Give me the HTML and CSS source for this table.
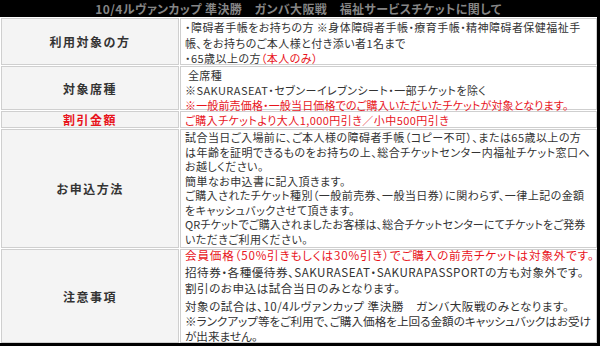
FILE: index.html
```html
<!DOCTYPE html>
<html lang="ja">
<head>
<meta charset="utf-8">
<link rel="stylesheet" href="styles.css">
</head>
<body>
<div class="frame">
  <div class="header">10/4ルヴァンカップ 準決勝　ガンバ大阪戦　福祉サービスチケットに関して</div>
  <div class="table">
    <div class="label">利用対象の方</div>
    <div class="cell r1">・障碍者手帳をお持ちの方 ※身体障碍者手帳・療育手帳・精神障碍者保健福祉手<br>帳、をお持ちのご本人様と付き添い者1名まで<br>・65歳以上の方<span class="red">（本人のみ）</span></div>

    <div class="label">対象席種</div>
    <div class="cell r2">&nbsp;全席種<br>※SAKURASEAT・セブンーイレブンシート・一部チケットを除く<br><span class="red tight">※一般前売価格・一般当日価格でのご購入いただいたチケットが対象となります。</span></div>

    <div class="label red">割引金額</div>
    <div class="cell r3 red">ご購入チケットより大人1,000円引き／小中500円引き</div>

    <div class="label">お申込方法</div>
    <div class="cell r4">試合当日ご入場前に、ご本人様の障碍者手帳（コピー不可）、または65歳以上の方<br>は年齢を証明できるものをお持ちの上、総合チケットセンター内福祉チケット窓口へ<br>お越しください。<br>簡単なお申込書に記入頂きます。<br>ご購入されたチケット種別（一般前売券、一般当日券）に関わらず、一律上記の金額<br>をキャッシュバックさせて頂きます。<br><span class="tight">QRチケットでご購入されましたお客様は、総合チケットセンターにてチケットをご発券</span><br>いただきご利用ください。</div>

    <div class="label">注意事項</div>
    <div class="cell r5">
      <p class="red first">会員価格（50%引きもしくは30%引き）でご購入の前売チケットは対象外です。</p>
      <p>招待券・各種優待券、SAKURASEAT・SAKURAPASSPORTの方も対象外です。</p>
      <p>割引のお申込は試合当日のみとなります。</p>
      <p class="gap">対象の試合は、10/4ルヴァンカップ 準決勝　ガンバ大阪戦のみとなります。</p>
      <p class="short">※ランクアップ等をご利用で、ご購入価格を上回る金額のキャッシュバックはお受け<br>が出来ません。</p>
    </div>
  </div>
</div>
</body>
</html>
```
FILE: styles.css
```css
html, body {
  margin: 0;
  padding: 0;
  background: #fff;
}
body {
  font-family: "Noto Sans CJK JP", "Noto Sans", sans-serif;
  color: #333;
}
.frame {
  width: 600px;
  height: 346px;
  box-sizing: border-box;
  border-right: 3px solid #000;
  border-bottom: 3px solid #000;
  background: #fff;
  overflow: hidden;
}
.header {
  height: 17px;
  background: #000;
  color: #858585;
  font-weight: bold;
  font-size: 12px;
  line-height: 17px;
  text-align: center;
  font-feature-settings: "palt";
  letter-spacing: 0.4px;
}
.table {
  display: grid;
  grid-template-columns: 178px 1fr;
  grid-template-rows: 47px 44px 17px 119px 94px;
  gap: 1px;
  padding: 1px 0 0 1px;
  background: #fff;
}
.label, .cell {
  border: 1px solid #cfcfcf;
  font-size: 11px;
  white-space: nowrap;
}
.label {
  background: #f4f4f4;
  display: flex;
  align-items: center;
  justify-content: center;
  font-weight: bold;
  font-size: 12px;
  letter-spacing: 1.5px;
  color: #333;
}
.cell {
  background: #fff;
  padding: 0 0 0 4px;
  font-feature-settings: "palt";
  letter-spacing: 0.45px;
  min-width: 0;
}
.r1 { line-height: 15.5px; padding-top: 1px; }
.r2 { line-height: 15px; padding-top: 1px; }
.r3 { line-height: 15px; padding-top: 1px; }
.r4 { line-height: 14.5px; }
.r5 { font-size: 11.6px; letter-spacing: 0.5px; }
.red { color: #e8141c; }
.tight { letter-spacing: 0.15px; }
.cell p {
  margin: 0;
  line-height: 16.5px;
}
.cell p.first { margin-top: -3px; letter-spacing: 0.8px; }
.cell p.gap { margin-top: 1px; }
.cell p.short { line-height: 15px; letter-spacing: 0; }
```
